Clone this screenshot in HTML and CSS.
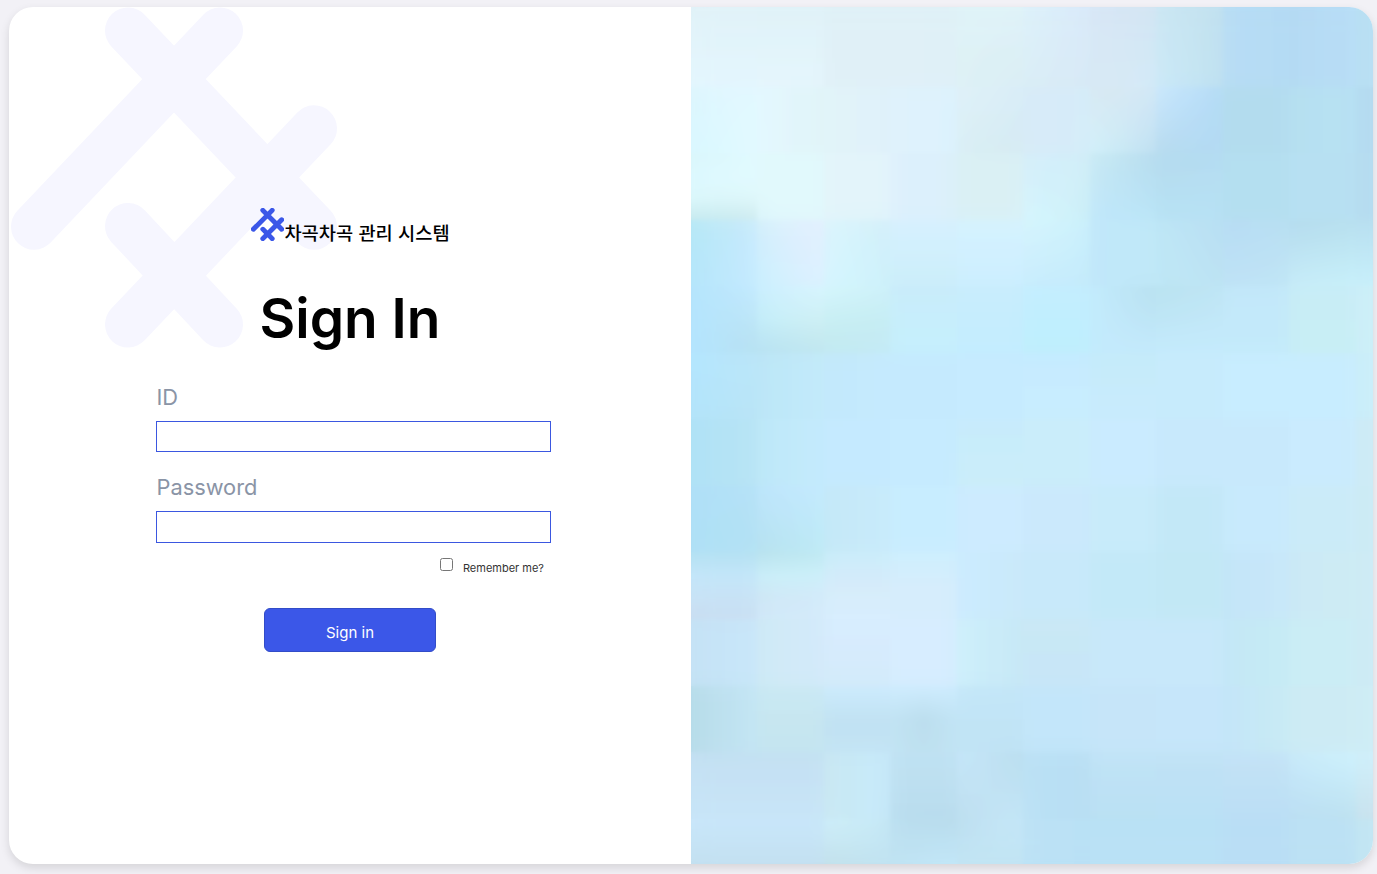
FILE: index.html
```html
<!DOCTYPE html>
<html lang="ko">
<head>
<meta charset="utf-8">
<title>Sign In</title>
<link rel="stylesheet" href="styles.css">
</head>
<body>
<svg class="defs" width="0" height="0" aria-hidden="true">
  <symbol id="mark" viewBox="0 0 326 340" preserveAspectRatio="none">
    <path d="M23 219 209 23.5M117 23.5 303 219M303 121 117 316.500M117 218.500 209 316.500" fill="none" stroke="currentColor" stroke-linecap="round"/>
  </symbol>
</svg>
<main class="card">
  <section class="pane">
    <svg class="watermark" aria-hidden="true"><use href="#mark"/></svg>
    <form class="form">
      <div class="brand">
        <svg class="brand-mark" aria-hidden="true"><use href="#mark"/></svg>
        <span class="brand-name">차곡차곡 관리 시스템</span>
      </div>
      <h1 class="title">Sign In</h1>
      <div class="field">
        <label class="label" for="id">ID</label>
        <input class="input" id="id" type="text">
      </div>
      <div class="field field-password">
        <label class="label" for="pw">Password</label>
        <input class="input input-password" id="pw" type="password">
      </div>
      <div class="remember">
        <input class="check" id="remember" type="checkbox">
        <label class="remember-label" for="remember">Remember me?</label>
      </div>
      <button class="submit" type="button">Sign in</button>
    </form>
  </section>
  <canvas class="art" id="art" width="682" height="857"></canvas>
</main>
<script src="art.js"></script>
</body>
</html>
```
FILE: styles.css
```css
* { box-sizing: border-box; }
body {
  margin: 0;
  height: 874px;
  padding: 7px 4px 10px 9px;
  overflow: hidden;
  background: #f2f1f6;
  font-family: Inter, "Noto Sans CJK KR", sans-serif;
}
.defs { position: absolute; }
.card {
  display: flex;
  width: 1364px;
  height: 857px;
  border-radius: 24px;
  overflow: hidden;
  background: #fff;
  box-shadow: 0 4px 10px rgba(0, 0, 0, 0.12);
}
.pane {
  position: relative;
  width: 682px;
  display: flex;
  justify-content: center;
}
.watermark {
  position: absolute;
  left: 2px;
  top: 0;
  width: 326px;
  height: 341px;
  color: #f6f6ff;
  stroke-width: 46px;
}
.form {
  position: relative;
  width: 395px;
  padding-top: 201px;
  margin-left: 7px;
  display: flex;
  flex-direction: column;
}
.brand {
  display: flex;
  justify-content: center;
  height: 36px;
  margin-right: 6px;
}
.brand-mark {
  width: 33px;
  height: 33px;
  color: #3b57e8;
  stroke-width: 49px;
}
.brand-name {
  margin-top: 10px;
  font: 500 18.700px/28px "Noto Sans CJK KR", sans-serif;
  color: #000;
  white-space: nowrap;
}
.title {
  margin: 40px 7px 0 0;
  font-size: 55px;
  line-height: 68px;
  font-weight: 600;
  text-align: center;
  color: #000;
}
.field {
  display: flex;
  flex-direction: column;
  margin-top: 25px;
}
.field-password { margin-top: 21px; }
.label {
  height: 38px;
  padding: 1px 0 0 0.5px;
  font-size: 21.800px;
  line-height: 27px;
  color: #8a94a6;
}
.field:not(.field-password) .label { height: 44px; padding-top: 7px; }
.input {
  height: 31px;
  margin: 0;
  border: 1px solid #3b57e0;
  border-radius: 0;
  background: #fff;
}
.input-password { height: 32px; }
.remember {
  display: flex;
  justify-content: flex-end;
  height: 36px;
  padding: 15px 7px 0 0;
}
.check { width: 13px; height: 13px; margin: 0 10px 0 0; }
.remember-label {
  font-size: 11px;
  line-height: 14px;
  padding-top: 3px;
  color: #333;
}
.submit {
  align-self: center;
  width: 172px;
  height: 44px;
  margin: 29px 7px 0 0;
  padding: 6px 0 0;
  border: 1px solid #324cc8;
  border-radius: 6px;
  background: #3b57e8;
  color: #fff;
  font: 400 15px/20px Inter, sans-serif;
}
.art { display: block; width: 682px; height: 857px; }
```
FILE: art.js
```javascript
// Soft tile mosaic. Each tile is a small grid of colour stops:
// "/" separates rows of stops, "," separates stops within a row.
const tiles = [
  "e1f2f8/e4f6fe e0f2f8/e5f6fd e0f1f7 e0f1f7,dff1f7 dff3f8,e0f3f8/def2f5,daedf5 ddf1fa,d9eafa/daeef6,d8e9f6 d8e7f6,d4e5f2/d8e8f6,d3e8f6/d8e9f5,d5eaf8 cbe7f3,c2e1ef/cbeaf8,c1e2ef b7ddf5,b5dbf4 b5daf3,b8def7 b9e0f3",
  "ddf6fe,e3f8ff/d9f7ff,e2fbff e3f8ff,e2f4f8 e2f4f9,dff1fa dff2fc,ddf2fe e0f1f8,d9edf9/d9eef4,d5ebf2 d8ebf8,d5edfa d9e8f1,d5e9f6/d4f3fb,c2e1f2 c9e8ff,b2daf7/b6daee,b3daf4 b3dded,b3ddef b6e0f1,b7e1f3 b5dbf0",
  "daf6fa,e0faff/dcf8ff,e2fbff/dcf8fc,dff8fb/c8e9ec,cce8e8 e1f9fc e3f4fb def1fd,dbeffb daf0f4 d4eefb,d3eef8/d5f6ff,cdf1f7 c8eaf3,b5dbee/bfe6fb,bbe6f8 b5dbee,b5dcf2/b7e2f4,b7e2f4 b5dff1 b7e0f2 b6dcf0",
  "b5e8f6,c8eafe/b5e6fb,c6eaff d5effb,e6eeff/cbf0ff,dff0ff daf5fd,d2f0fa/d5f6ff,cdf1fb d6f1ff/cceefa d5f3ff/cdeeff d6f5fd,ccf2fc/c9ecfd,c4ebfb c0e7fa,c0e9f8 bee6f6,b9dff2/c0e8f7,bce3f3 b8dcf5,b9dff2/bee2f5,c0e5f5 b4dbed,b8e0ee/c8edf9,c8f1fb b8dff0/c8f0fb",
  "b5e5fc,c3eaff/b4e5ff,b6dfef cceffe,d8f6ff/c5effa,d0f0f4/b6e0f0,bfe5ec d5f6fd,cff2f9/c8eff4,c6edf3/c2e9ee,c4eaf3 c9ecfb/c5f0fd c8edfc/c4edff c4eeff/bdeffd c3ecfd,b7dfee/c4eafd,c4eafd b9e2ef,bfe5f4/c5ebfd,c5ebfd c3e8fb/c4eafa c9edf7/c7eef3 cdeff8",
  "b4e6ff,bce7f9/b3e4fa,b9e4f6 bce7f7,c3eafb c4e9fc,c5eafe c5eafe c6ecff c6ecff/c9edff c5ebfa/c9ecfd c7ecfc c8edff c8edff cbeef9",
  "b0e2f6,b8e4f6 bee8f8,c4ebfd c5eaff c6ebff c9ecfc/caeef8 caedfa caecff c9e9fc c9e9fc caebfe ceebf5",
  "b0e0f8,b5e1f7/aee0f6,b2e3f4 bfe6fd,c4eaff/b6e1ef,bdebf6 c5e8f7,c8ebfb c8edff cdebff cbe9fc c8ebfa c3e8f7 c8eafd cbebf8 cdebf5",
  "b4e1f1/c4e6fa/c8e3f6/cadcf0 b9e1eb,bde8f0/ccf1fa,ccf1fa/cfe7f5,d3eafa/d3eafa,d5eafa cbedfa/d6ecfa/d9effe cfeffe/d6edfc/d6edfc cbecff,cae9fa c8e9fb c4e9f8 c2e8f6 c4e6f8,c8e8fa cbe9f6,ceecf3 ceebf5",
  "c5e2f5,c8e7fb cfeaf6,d4eafa d8edff/d4ebfa d7edff cdf0fb,c8e8f6 cae8f6/c8e7f7 c9e8fb c9e8fb c4e7f7,c6ecf4 cbedf6 ceebf5",
  "b7dce9,c4e6f5 cae9f3/c4e5ef ccecff/c1e2f2/c2e3f4 ceedff,ceedff,ceedff/c2e4f4,badcec,c2e5f6/c2e5f4,bfe0ef,c2e5f4 c3e6f8/c0e3f5 c4e7fb c6e5f9 c6e6fa c4e6f8,c8ebf5 ceecf4 cfedf6",
  "c4e0f2/c8e5f8 c4e0f2/c8e5f8 cae9f2,c8eafc c0e2f3/b9dced c8e8fb,b9dcec/bedfef,c5e7f8 bbe1f5,b9def3 c1e4f7/bae0f3 c1e3f6/bae0f5 c4e3f7/bbdef4 c9ebfb,cff3ff/bbdef3,bce1ef d0f0fb/cbe2ed",
  "c9e7fb/c3e0f0 c9e7fb/c3e0f0 d0f1fb,c6e9f6/c2e0ea,c1e3f2 badeef,b8dbeb/c0e3f2,c3e8fa bddff0,c7e8fa/c2e5f3,c2e5f3 bce2f5,bae0f5 bae1f6 bae1f6 badef5 bce1f4 c3e6f3"
];
const xs = [0, 66, 133, 199, 266, 332, 399, 465, 532, 598, 665, 682];
const ys = [0, 80, 146, 213, 279, 346, 412, 479, 545, 612, 679, 745, 812, 857];

const ctx = document.getElementById("art").getContext("2d");
const img = ctx.createImageData(682, 857);

function along(stops, t, read) {
  const p = t * (stops.length - 1);
  const i = Math.min(Math.floor(p), Math.max(stops.length - 2, 0));
  const a = read(stops[i]);
  const b = read(stops[Math.min(i + 1, stops.length - 1)]);
  return a.map((v, k) => v + (b[k] - v) * (p - i));
}

tiles.forEach((line, r) => {
  line.split(" ").forEach((cell, c) => {
    const grid = cell.split("/").map(row => row.split(",").map(h =>
      [0, 2, 4].map(k => parseInt(h.slice(k, k + 2), 16))));
    for (let y = ys[r]; y < ys[r + 1]; y++) {
      const v = (y - ys[r]) / (ys[r + 1] - ys[r]);
      for (let x = xs[c]; x < xs[c + 1]; x++) {
        const u = (x - xs[c]) / (xs[c + 1] - xs[c]);
        const rgb = along(grid, v, row => along(row, u, s => s));
        img.data.set([...rgb, 255], (y * 682 + x) * 4);
      }
    }
  });
});
ctx.putImageData(img, 0, 0);

// Soften the tile seams: a wide, partly transparent pass, then a fine one.
ctx.filter = "blur(12px)";
ctx.globalAlpha = 0.6;
ctx.drawImage(ctx.canvas, 0, 0);
ctx.filter = "blur(2px)";
ctx.globalAlpha = 1;
ctx.drawImage(ctx.canvas, 0, 0);
ctx.filter = "none";
```
